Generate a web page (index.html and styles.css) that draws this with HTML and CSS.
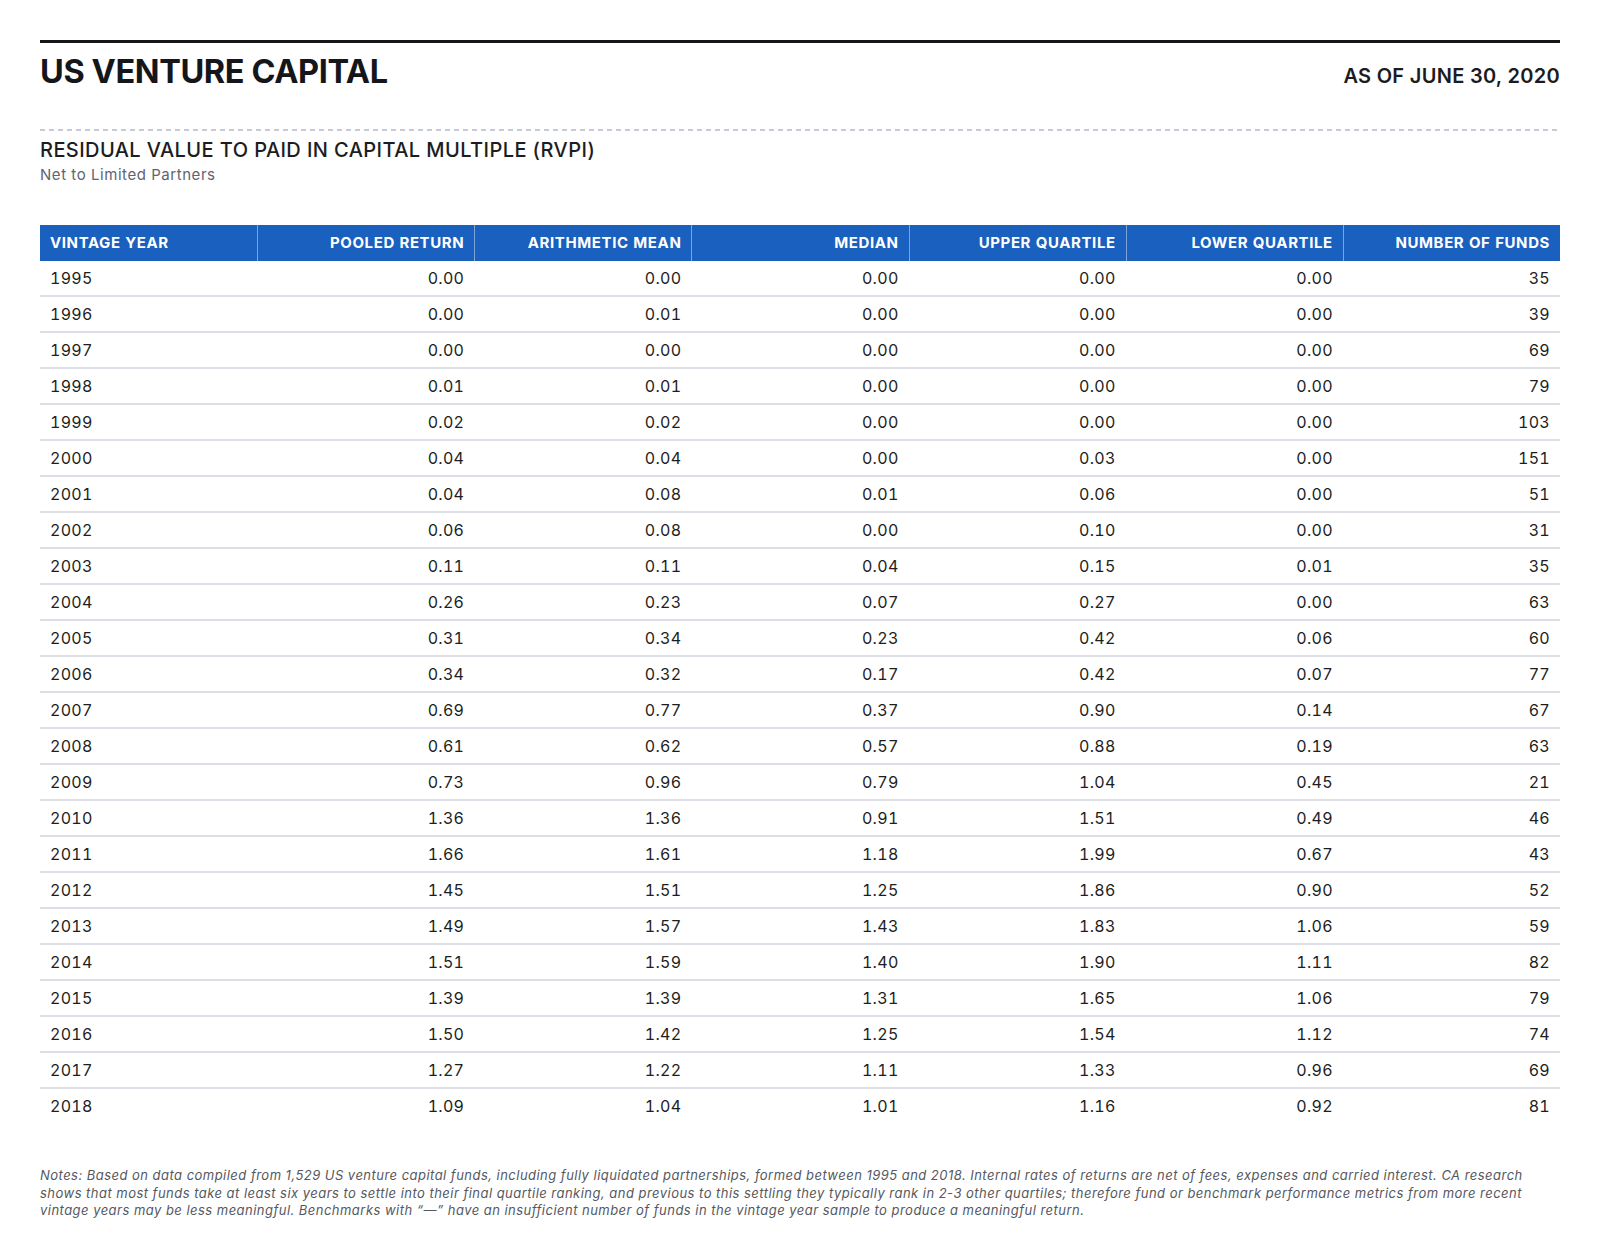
FILE: index.html
```html
<!DOCTYPE html>
<html lang="en">
<head>
<meta charset="utf-8">
<title>US Venture Capital — RVPI</title>
<link rel="stylesheet" href="styles.css">
</head>
<body>
<main class="page">
  <header class="top">
    <h1 class="title">US VENTURE CAPITAL</h1>
    <div class="asof">AS OF JUNE 30, 2020</div>
  </header>
  <div class="dash"></div>
  <h2 class="subtitle">RESIDUAL VALUE TO PAID IN CAPITAL MULTIPLE (RVPI)</h2>
  <p class="caption">Net to Limited Partners</p>

  <table class="data">
    <thead>
      <tr>
        <th class="first">VINTAGE YEAR</th>
        <th>POOLED RETURN</th>
        <th>ARITHMETIC MEAN</th>
        <th>MEDIAN</th>
        <th>UPPER QUARTILE</th>
        <th>LOWER QUARTILE</th>
        <th>NUMBER OF FUNDS</th>
      </tr>
    </thead>
    <tbody>
      <tr><td class="first">1995</td><td>0.00</td><td>0.00</td><td>0.00</td><td>0.00</td><td>0.00</td><td>35</td></tr>
      <tr><td class="first">1996</td><td>0.00</td><td>0.01</td><td>0.00</td><td>0.00</td><td>0.00</td><td>39</td></tr>
      <tr><td class="first">1997</td><td>0.00</td><td>0.00</td><td>0.00</td><td>0.00</td><td>0.00</td><td>69</td></tr>
      <tr><td class="first">1998</td><td>0.01</td><td>0.01</td><td>0.00</td><td>0.00</td><td>0.00</td><td>79</td></tr>
      <tr><td class="first">1999</td><td>0.02</td><td>0.02</td><td>0.00</td><td>0.00</td><td>0.00</td><td>103</td></tr>
      <tr><td class="first">2000</td><td>0.04</td><td>0.04</td><td>0.00</td><td>0.03</td><td>0.00</td><td>151</td></tr>
      <tr><td class="first">2001</td><td>0.04</td><td>0.08</td><td>0.01</td><td>0.06</td><td>0.00</td><td>51</td></tr>
      <tr><td class="first">2002</td><td>0.06</td><td>0.08</td><td>0.00</td><td>0.10</td><td>0.00</td><td>31</td></tr>
      <tr><td class="first">2003</td><td>0.11</td><td>0.11</td><td>0.04</td><td>0.15</td><td>0.01</td><td>35</td></tr>
      <tr><td class="first">2004</td><td>0.26</td><td>0.23</td><td>0.07</td><td>0.27</td><td>0.00</td><td>63</td></tr>
      <tr><td class="first">2005</td><td>0.31</td><td>0.34</td><td>0.23</td><td>0.42</td><td>0.06</td><td>60</td></tr>
      <tr><td class="first">2006</td><td>0.34</td><td>0.32</td><td>0.17</td><td>0.42</td><td>0.07</td><td>77</td></tr>
      <tr><td class="first">2007</td><td>0.69</td><td>0.77</td><td>0.37</td><td>0.90</td><td>0.14</td><td>67</td></tr>
      <tr><td class="first">2008</td><td>0.61</td><td>0.62</td><td>0.57</td><td>0.88</td><td>0.19</td><td>63</td></tr>
      <tr><td class="first">2009</td><td>0.73</td><td>0.96</td><td>0.79</td><td>1.04</td><td>0.45</td><td>21</td></tr>
      <tr><td class="first">2010</td><td>1.36</td><td>1.36</td><td>0.91</td><td>1.51</td><td>0.49</td><td>46</td></tr>
      <tr><td class="first">2011</td><td>1.66</td><td>1.61</td><td>1.18</td><td>1.99</td><td>0.67</td><td>43</td></tr>
      <tr><td class="first">2012</td><td>1.45</td><td>1.51</td><td>1.25</td><td>1.86</td><td>0.90</td><td>52</td></tr>
      <tr><td class="first">2013</td><td>1.49</td><td>1.57</td><td>1.43</td><td>1.83</td><td>1.06</td><td>59</td></tr>
      <tr><td class="first">2014</td><td>1.51</td><td>1.59</td><td>1.40</td><td>1.90</td><td>1.11</td><td>82</td></tr>
      <tr><td class="first">2015</td><td>1.39</td><td>1.39</td><td>1.31</td><td>1.65</td><td>1.06</td><td>79</td></tr>
      <tr><td class="first">2016</td><td>1.50</td><td>1.42</td><td>1.25</td><td>1.54</td><td>1.12</td><td>74</td></tr>
      <tr><td class="first">2017</td><td>1.27</td><td>1.22</td><td>1.11</td><td>1.33</td><td>0.96</td><td>69</td></tr>
      <tr><td class="first">2018</td><td>1.09</td><td>1.04</td><td>1.01</td><td>1.16</td><td>0.92</td><td>81</td></tr>
    </tbody>
  </table>

  <p class="notes">Notes: Based on data compiled from 1,529 US venture capital funds, including fully liquidated partnerships, formed between 1995 and 2018. Internal rates of returns are net of fees, expenses and carried interest. CA research<br>shows that most funds take at least six years to settle into their final quartile ranking, and previous to this settling they typically rank in 2-3 other quartiles; therefore fund or benchmark performance metrics from more recent<br>vintage years may be less meaningful. Benchmarks with “—” have an insufficient number of funds in the vintage year sample to produce a meaningful return.</p>
</main>
</body>
</html>
```

FILE: styles.css
```css
* { box-sizing: border-box; }

html, body {
  margin: 0;
  padding: 0;
  background: #ffffff;
}

body {
  font-family: Inter, "Noto Sans", "Liberation Sans", sans-serif;
  color: #1b1c21;
}

.page {
  padding: 40px 40px 0 40px;
}

.top {
  display: flex;
  justify-content: space-between;
  align-items: baseline;
  border-top: 3px solid #15161a;
  padding-top: 9px;
}

.title {
  margin: 0;
  font-size: 32.5px;
  line-height: 40px;
  font-weight: 700;
  color: #15161a;
  letter-spacing: -0.4px;
}

.asof {
  font-size: 20px;
  font-weight: 600;
  color: #1b1c21;
  line-height: 24px;
  letter-spacing: 0.3px;
}

.dash {
  margin-top: 37px;
  height: 2px;
  background-image: repeating-linear-gradient(to right, #c7cad6 0, #c7cad6 5px, transparent 5px, transparent 9px);
}

.subtitle {
  margin: 7px 0 0 0;
  font-size: 20px;
  line-height: 24px;
  font-weight: 500;
  color: #1c1d22;
  letter-spacing: 0.42px;
}

.caption {
  margin: 3px 0 0 0;
  font-size: 15px;
  line-height: 20px;
  color: #5f6471;
  letter-spacing: 0.55px;
}

.data {
  margin-top: 40px;
  width: 100%;
  table-layout: fixed;
  border-collapse: separate;
  border-spacing: 0;
  font-variant-numeric: tabular-nums;
}

.data th {
  background: #1a60be;
  color: #ffffff;
  font-size: 15px;
  font-weight: 700;
  line-height: 36px;
  height: 36px;
  padding: 0 10px;
  text-align: right;
  white-space: nowrap;
  border-left: 1px solid #7ea4da;
  letter-spacing: 0.6px;
}

.data th.first {
  border-left: none;
  text-align: left;
}

.data td {
  font-size: 16px;
  line-height: 33px;
  height: 34px;
  padding: 1px 10px 0 10px;
  text-align: right;
  color: #1d1e22;
  border-bottom: 2px solid #dfe0e7;
  letter-spacing: 0.3px;
}

.data td.first {
  text-align: left;
}

.data tbody tr:last-child td {
  border-bottom: none;
}

.notes {
  margin: 44px 0 0 0;
  font-size: 13px;
  line-height: 17.6px;
  font-style: italic;
  color: #55585f;
  letter-spacing: 0.47px;
}
```
